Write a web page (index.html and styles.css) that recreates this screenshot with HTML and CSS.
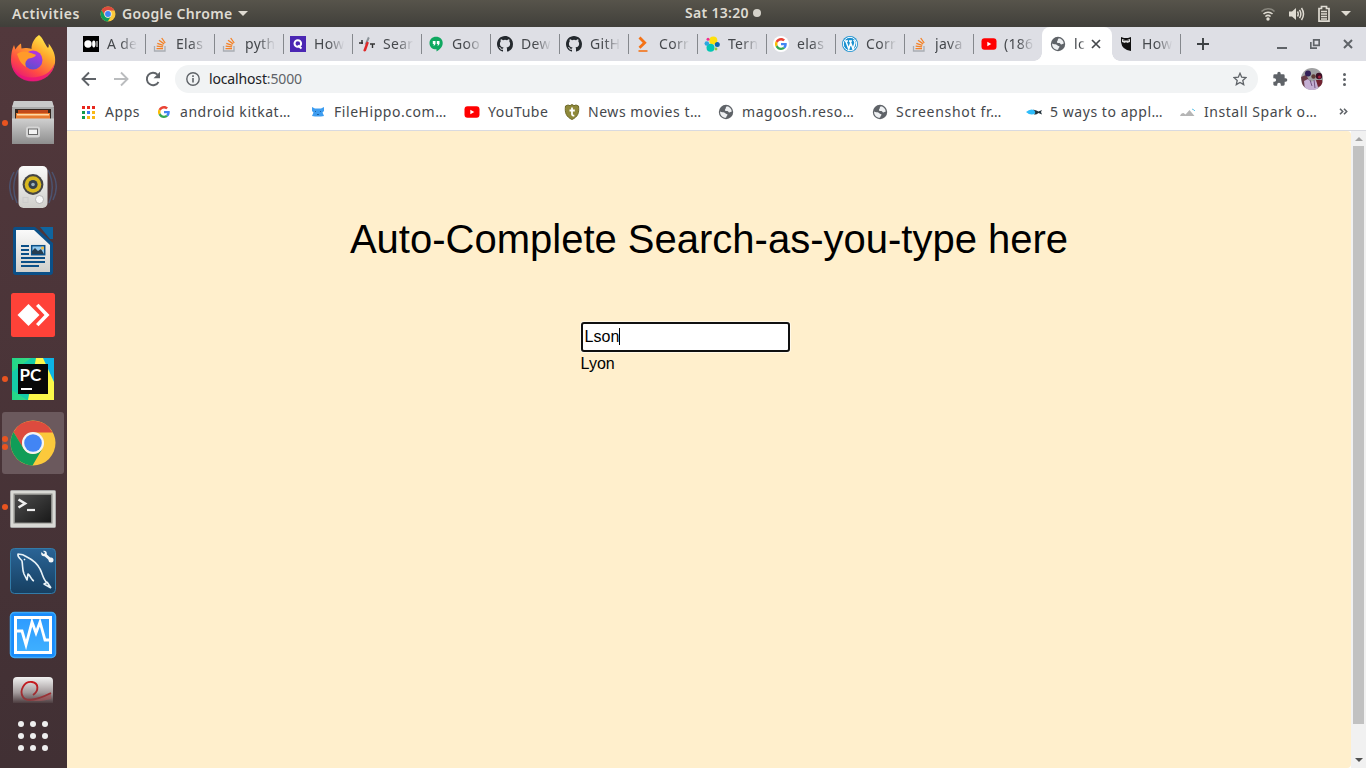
FILE: index.html
```html
<!DOCTYPE html>
<html lang="en">
<head>
<meta charset="utf-8">
<title>localhost:5000</title>
<link rel="stylesheet" href="styles.css">
</head>
<body>
<svg class="defs" width="0" height="0">
  <defs>
    <linearGradient id="ffA" x1="0.8" y1="0" x2="0.2" y2="1"><stop offset="0" stop-color="#fff44f"/><stop offset=".35" stop-color="#ffa72b"/><stop offset=".7" stop-color="#ff4a45"/><stop offset="1" stop-color="#e3107e"/></linearGradient>
    <linearGradient id="ffB" x1="0.7" y1="0" x2="0.3" y2="1"><stop offset="0" stop-color="#b833e1"/><stop offset="1" stop-color="#5a4fd0"/></linearGradient>
    <linearGradient id="metal" x1="0" y1="0" x2="0" y2="1"><stop offset="0" stop-color="#d0d0d0"/><stop offset="1" stop-color="#8e8e8e"/></linearGradient>
    <linearGradient id="white" x1="0" y1="0" x2="0" y2="1"><stop offset="0" stop-color="#fafafa"/><stop offset="1" stop-color="#cfcfcb"/></linearGradient>
    <linearGradient id="pcA" x1="0" y1="0" x2="1" y2="0"><stop offset="0" stop-color="#21d789"/><stop offset=".55" stop-color="#3fdc80"/><stop offset="1" stop-color="#a8ec62"/></linearGradient>
    <linearGradient id="dark" x1="0" y1="0" x2="1" y2="1"><stop offset="0" stop-color="#4c4c4c"/><stop offset=".5" stop-color="#333"/><stop offset="1" stop-color="#191919"/></linearGradient>
    <linearGradient id="blue" x1="0" y1="0" x2="0" y2="1"><stop offset="0" stop-color="#2a6496"/><stop offset="1" stop-color="#163f61"/></linearGradient>
    <linearGradient id="sky" x1="0" y1="0" x2="0" y2="1"><stop offset="0" stop-color="#2e9bff"/><stop offset="1" stop-color="#3fb0ff"/></linearGradient>
    <linearGradient id="fade" x1="0" y1="0" x2="0" y2="1"><stop offset="0" stop-color="#f2f2f2"/><stop offset=".6" stop-color="#a39b9c"/><stop offset="1" stop-color="#4d3d40"/></linearGradient>
    <linearGradient id="swirl" x1="0" y1="0" x2="0" y2="1"><stop offset="0" stop-color="#c8181c"/><stop offset="1" stop-color="#8a3a3e"/></linearGradient>
    <symbol id="chrome" viewBox="0 0 48 48">
      <circle cx="24" cy="24" r="22.500" fill="#fbc93c"/>
      <path d="M4.500 13A22.500 22.500 0 0 1 43.700 13.500H24a11 11 0 0 0-9.800 16z" fill="#dd4b3e"/>
      <path d="M4.500 13A22.500 22.500 0 0 0 23.500 46.500l10-17A11 11 0 0 1 14.500 29.500z" fill="#109d58"/>
      <circle cx="24" cy="24" r="11" fill="#f4f4f4"/><circle cx="24" cy="24" r="8.800" fill="#4285f4"/>
    </symbol>
    <symbol id="so" viewBox="0 0 16 16">
      <path d="M2.500 10v5h10.500v-5" fill="none" stroke="#a9adb2" stroke-width="1.3"/>
      <path d="M4.500 12.700h6.500M4.700 10.200l6.400.6M5.300 7.400l6 1.900M7 4.300l5.100 3.600M9.700 2l3.500 5" fill="none" stroke="#f48024" stroke-width="1.300"/>
    </symbol>
    <symbol id="google" viewBox="0 0 48 48">
      <path fill="#ea4335" d="M24 9.500c3.500 0 6.700 1.200 9.200 3.600l6.800-6.800C35.900 2.400 30.500 0 24 0 14.600 0 6.500 5.400 2.600 13.200l8 6.200C12.400 13.700 17.700 9.500 24 9.500z"/>
      <path fill="#4285f4" d="M47 24.500c0-1.600-.2-3.100-.4-4.500H24v9h12.900c-.6 3-2.200 5.500-4.700 7.200l7.700 6C44.400 38 47 31.800 47 24.500z"/>
      <path fill="#fbbc05" d="M10.500 28.600a14.500 14.500 0 0 1 0-9.200l-8-6.200a24 24 0 0 0 0 21.600z"/>
      <path fill="#34a853" d="M24 48c6.500 0 11.900-2.100 15.900-5.800l-7.700-6c-2.200 1.500-4.900 2.300-8.200 2.300-6.300 0-11.600-4.200-13.500-9.900l-8 6.200C6.500 42.600 14.600 48 24 48z"/>
    </symbol>
    <symbol id="github" viewBox="0 0 16 16">
      <path fill="#24292e" fill-rule="evenodd" d="M8 0C3.580 0 0 3.580 0 8c0 3.540 2.290 6.530 5.470 7.590.4.070.55-.17.55-.38 0-.19-.01-.82-.01-1.490-2.010.37-2.530-.49-2.690-.94-.09-.23-.48-.94-.82-1.130-.28-.15-.68-.52-.01-.53.63-.01 1.080.58 1.230.82.720 1.210 1.870.87 2.330.66.070-.52.280-.87.510-1.070-1.780-.2-3.640-.89-3.640-3.950 0-.87.310-1.590.820-2.150-.08-.2-.36-1.020.08-2.120 0 0 .67-.21 2.200.82a7.600 7.600 0 0 1 4 0c1.530-1.040 2.200-.82 2.200-.82.440 1.100.160 1.920.080 2.120.510.560.820 1.270.820 2.150 0 3.070-1.870 3.750-3.650 3.950.290.250.540.730.540 1.480 0 1.070-.01 1.930-.01 2.200 0 .21.150.46.550.38A8.010 8.010 0 0 0 16 8c0-4.420-3.580-8-8-8z"/>
    </symbol>
    <symbol id="globe" viewBox="0 0 16 16">
      <circle cx="8" cy="8" r="7.200" fill="#5f6368"/>
      <path d="M8.800 2.200c2.700.4 4.700 2.500 5 5.200-1 .2-1.500 1-2.400 1-1.300 0-.8-1.500-2.100-1.500-1 0-2.400.2-2.400-.9 0-1 .9-1.100.9-2 0-.9.500-1.200 1-1.800zM2.100 7.500c1.600.9 3 .5 4.200 1.100 1 .5 1.100 1.200 2.300 1.300 1 0 1.200 1 .5 1.600-.7.500-.5 1.400-1.200 2.300C4.400 13.700 1.800 11 2.100 7.500z" fill="#eef0f2"/>
    </symbol>
    <symbol id="yt" viewBox="0 0 16 16"><rect x=".5" y="2.300" width="15" height="11.400" rx="3" fill="#f00"/><path d="M6.300 5.700v4.600L10.300 8z" fill="#fff"/></symbol>
  </defs>
</svg>

<header class="topbar">
  <span class="top-activities">Activities</span>
  <svg class="top-chrome" width="16" height="16"><use href="#chrome"/></svg>
  <span class="top-app">Google Chrome</span>
  <i class="caret"></i>
  <div class="clock"><span>Sat 13:20</span><i class="dot"></i></div>
  <div class="tray">
    <svg width="16" height="16" viewBox="0 0 16 16" fill="none" stroke="#dfdbd2" stroke-width="1.600"><path d="M1.500 5.500a9 9 0 0 1 13 0" opacity=".4"/><path d="M3.500 8a6.500 6.500 0 0 1 9 0M5.400 10.500a4 4 0 0 1 5.200 0"/><circle cx="8" cy="13" r="1.700" fill="#dfdbd2" stroke="none"/></svg>
    <svg width="17" height="16" viewBox="0 0 17 16" fill="none" stroke="#dfdbd2" stroke-width="1.500"><path d="M1 5.500h3L8 2v12l-4-3.500H1z" fill="#dfdbd2" stroke="none"/><path d="M9.500 5.500q1.500 2.500 0 5M11.500 3.800q2.700 4.200 0 8.400M13.500 2q4 6 0 12"/></svg>
    <svg width="14" height="18" viewBox="0 0 14 18"><path d="M2 3.500h2.500v-2h5v2H12v12.700H2z" fill="none" stroke="#dfdbd2" stroke-width="1.700"/><path d="M4 6.500h6M4 9h6M4 11.500h6M4 14h6" stroke="#dfdbd2" stroke-width="1.300"/></svg>
    <i class="caret"></i>
  </div>
</header>

<main class="desktop">
  <nav class="launcher">
    <div class="slot"><svg width="48" height="48" viewBox="0 1 48 48"><path d="M30 1c4 3 5 8 9 13 1-1 1-3 .5-4.500C44 15 47 21 46 29 44 40 35 47 24 47 11 47 2 38 2 26c0-6 1-11 3-15l1.500 4.500C7.500 13 9.500 11 12 9.500l.5 5c3-1 7-.5 10 .5 0-6 3-11 7.500-14z" fill="url(#ffA)"/><path d="M2.500 29c2 9 10 14.500 20 14.500 11 0 20-5 23-14C44.500 40 35 47.500 24 47.500 12 47.500 4 40 2.500 29z" fill="#e8127d" opacity=".75"/><circle cx="24" cy="26" r="9.500" fill="url(#ffB)"/><path d="M8 20c6-4 10-2 14-1 2 1 4 1 5 2-2 4-7 2-9 5-2 2-2 4-1 7-6-4-7-8-9-13z" fill="#ff9a2a"/></svg></div>
    <div class="slot run"><svg width="48" height="48" viewBox="0 0 48 48"><path d="M5 2h38l2 7v36H3V9z" fill="#aaa"/><path d="M5 2h38l2 6H3z" fill="#c9c9c9"/><path d="M6 10h36v10H6z" fill="#332721"/><path d="M9 11h30v3H9z" fill="#c2491a"/><path d="M7 14h34v6H7z" fill="#e87b31"/><path d="M8 15h32v1.500H8z" fill="#ffd9a6"/><path d="M3 19.500h42v25.500H3z" fill="url(#metal)"/><rect x="17" y="27.500" width="14" height="11" rx="2.500" fill="#d5d5d5"/><rect x="19.500" y="30" width="9" height="5.500" fill="#f3f3f3" stroke="#6a6a6a"/></svg></div>
    <div class="slot"><svg width="48" height="48" viewBox="0 0 48 48"><path d="M5 9Q-3 23 4 37M43 9q8 14 1 28M9 7Q1 24 8 40M39 7q8 17 1 33" fill="none" stroke="#4b6591" stroke-width="1.500" opacity=".6"/><rect x="9.500" y="3" width="29" height="42" rx="5" fill="url(#white)"/><circle cx="24" cy="21.500" r="10.400" fill="#454545"/><circle cx="24" cy="21.500" r="8.300" fill="#d8b81f"/><circle cx="24" cy="21.500" r="4.600" fill="#34404c"/><circle cx="24" cy="21.500" r="1.800" fill="#9bb0bb"/><circle cx="30.500" cy="36.500" r="4" fill="#f7f7f7" stroke="#aaa" stroke-width=".8"/><rect x="14" y="34.500" width="5" height="5" fill="none" stroke="#ccc"/></svg></div>
    <div class="slot"><svg width="48" height="48" viewBox="0 0 48 48"><path d="M6 0h20l18 16v29q0 3-3 3H7q-3 0-3-3V3q0-3 2-3z" fill="#0b5088"/><path d="M31 0h13v12h-3z" fill="#0f659f"/><path d="M7 3h18l16 15v27H7z" fill="url(#white)"/><path d="M12 19h8M12 23h8M12 27h8M12 31h24M12 35h24M12 39h18" stroke="#0b5088" stroke-width="2"/><rect x="22.700" y="18.700" width="13" height="9" fill="#91c9ef" stroke="#0b5088" stroke-width="1.500"/><path d="M23 27v-3l3-3 3 3 3-2 3 5z" fill="#263e52"/><circle cx="33.500" cy="21" r="1.500" fill="#f3ba3b"/></svg></div>
    <div class="slot"><svg width="48" height="48" viewBox="0 0 48 48"><rect x="2" y="2" width="44" height="44" rx="2.500" fill="#ff4238"/><path d="M8.500 24l11-11 11 11-11 11z" fill="#fff"/><path d="M27 15l2.500-2.300L40.500 24l-11 11.300L27 33l8.500-9z" fill="#fff"/></svg></div>
    <div class="slot run"><svg width="48" height="48" viewBox="0 0 48 48"><rect x="3" y="3" width="42" height="42" fill="url(#pcA)"/><path d="M3 17L22 3h12l-8 42H18L3 35z" fill="#14cba7"/><path d="M27 3h10l8 23v19H19z" fill="#fcf84a"/><path d="M34 3h11v24z" fill="#0cb4e5"/><rect x="9" y="9" width="30" height="30" fill="#080808"/><rect x="12" y="33" width="11" height="2" fill="#fff"/><text class="pc" x="10.500" y="26">PC</text></svg></div>
    <div class="slot active two"><svg width="48" height="48"><use href="#chrome"/></svg></div>
    <div class="slot run"><svg width="48" height="48" viewBox="0 -2 48 48"><rect x="1.500" y="5.500" width="45" height="37" rx="1" fill="#d9d9d5" stroke="#aaa"/><rect x="4.500" y="8.500" width="39" height="30" fill="#8b8b88"/><rect x="6" y="10" width="36" height="27.500" fill="url(#dark)"/><path d="M9.500 14.500l6.500 4-6.500 4" fill="none" stroke="#eee" stroke-width="2.600"/><path d="M18 25h8" stroke="#eee" stroke-width="2.200"/></svg></div>
    <div class="slot"><svg width="48" height="48" viewBox="0 0 48 48"><rect x="1.500" y="1.500" width="45" height="45" rx="4" fill="url(#blue)" stroke="#327ba8"/><path d="M42 41l-7-4 3-1.500c-4-3-4-8-7-13.500-3-6-7-9-13-12-4-3-7-3-9-3-1 3 3 5 4 7 1 5 0 8 2 13l3 6 1-6c3 2 3 6 6 7M42 41l-4-6M15 12l1 1" fill="none" stroke="#e8f2f7" stroke-width="1.600" stroke-linejoin="round"/><path d="M34 6l9 8" stroke="#f2f6f8" stroke-width="3"/><circle cx="35" cy="6.500" r="2.800" fill="#f2f6f8"/><circle cx="42" cy="13" r="2.500" fill="#f2f6f8"/><path d="M32.500 4l3 2.500" stroke="#28608f" stroke-width="1.800"/></svg></div>
    <div class="slot"><svg width="48" height="48" viewBox="0 0 48 48"><rect x="1.500" y="1.500" width="45" height="45" rx="4" fill="#188bfb" stroke="#3ea9f5" stroke-width="1.500"/><rect x="6.500" y="6.500" width="35" height="35" fill="url(#sky)" stroke="#fff" stroke-width="3"/><path d="M8 20h5l4 14 6-23 4 11 4-11 5 18h5" fill="none" stroke="#fff" stroke-width="2.800"/></svg></div>
    <div class="slot-cut"><svg width="48" height="30" viewBox="0 0 48 30"><path d="M4 27V5q0-4 4-4h32q4 0 4 4v22z" fill="url(#fade)"/><path d="M42 17c-9 6-18 6-24 7 8 2 17 1 24-1z" fill="#a85356" opacity=".6"/><path d="M24 19c6-4 6-12-1-13-8-1-13 9-9 15 3 5 14 3 28-4" fill="none" stroke="url(#swirl)" stroke-width="1.900"/></svg></div>
    <div class="apps-grid"><i></i><i></i><i></i><i></i><i></i><i></i><i></i><i></i><i></i></div>
  </nav>

  <section class="browser">
    <div class="tabstrip">
      <div class="tab"><svg viewBox="0 0 16 16"><rect width="16" height="16" fill="#000"/><circle cx="5" cy="8" r="3.700" fill="#fff"/><ellipse cx="10.800" cy="8" rx="1.700" ry="3.400" fill="#fff"/><path d="M14 5v6" stroke="#fff"/></svg><span>A de</span></div>
      <div class="tab"><svg><use href="#so"/></svg><span>Elas</span></div>
      <div class="tab"><svg><use href="#so"/></svg><span>pyth</span></div>
      <div class="tab"><svg viewBox="0 0 16 16"><rect width="16" height="16" fill="#4b27b3"/><circle cx="7.800" cy="7.500" r="3.300" fill="none" stroke="#fff" stroke-width="2"/><path d="M8 9.500l3.500 3" stroke="#fff" stroke-width="2"/></svg><span>How</span></div>
      <div class="tab"><svg viewBox="0 0 16 16"><path d="M0 7h4M3 4v4" stroke="#333" stroke-width="1.500"/><path d="M9 .8l1.700 1.200-3.200 7-1.800-.7z" fill="#8b9298"/><path d="M7.700 5.500l2.200 1-3 8.500q-1.700 1-2.600-.5z" fill="#df2929"/><path d="M11 8h5M13.500 8v4" stroke="#333" stroke-width="1.400"/></svg><span>Sear</span></div>
      <div class="tab"><svg viewBox="0 0 16 16"><path d="M8 .8c4 0 6.700 2.700 6.700 6.200 0 4-3 6.800-6.200 8.500v-2.200C4.500 13.500 1.500 11 1.500 7.200 1.500 3.500 4.300.8 8 .8z" fill="#0fa860"/><path d="M4.800 5h2.700v3L6.400 9.500H5.300L6 8H4.800zM8.800 5h2.700v3l-1.100 1.500H9.300L10 8H8.800z" fill="#fff"/></svg><span>Goo</span></div>
      <div class="tab"><svg><use href="#github"/></svg><span>Dew</span></div>
      <div class="tab"><svg><use href="#github"/></svg><span>GitH</span></div>
      <div class="tab"><svg viewBox="0 0 16 16"><path d="M4.500 1.500L9.700 6.800l-5.200 5" fill="none" stroke="#f47216" stroke-width="2.800"/><path d="M3.500 15h9" stroke="#f47216" stroke-width="1.600"/></svg><span>Corr</span></div>
      <div class="tab"><svg viewBox="0 0 16 16"><circle cx="9.300" cy="4.500" r="4" fill="#fee00d"/><circle cx="6.500" cy="11.700" r="4" fill="#03c6b3"/><circle cx="2.800" cy="7.500" r="2.300" fill="#2da8df"/><circle cx="13.300" cy="8.400" r="2.500" fill="#0b64b1"/><circle cx="4" cy="3.300" r="1.500" fill="#f12a91"/><circle cx="12" cy="13" r="1.400" fill="#93c93e"/></svg><span>Tern</span></div>
      <div class="tab"><svg viewBox="0 0 16 16"><circle cx="8" cy="8" r="8" fill="#fff"/><use href="#google" x="2" y="2" width="12" height="12"/></svg><span>elas</span></div>
      <div class="tab"><svg viewBox="0 0 16 16"><circle cx="8" cy="8" r="8" fill="#1c91d0"/><circle cx="8" cy="8" r="6.700" fill="none" stroke="#fff"/><path d="M3 5h3M3.800 5l3 8L8.500 7.500M7 5h3M8 5l3 8 2-6q0-2-1.500-3" fill="none" stroke="#fff" stroke-width="1.500"/></svg><span>Corr</span></div>
      <div class="tab"><svg><use href="#so"/></svg><span>java</span></div>
      <div class="tab nosep"><svg class="nudge"><use href="#yt"/></svg><span>(186</span></div>
      <div class="tab current"><svg><use href="#globe"/></svg><span>lc</span><svg class="close" viewBox="0 0 10 10"><path d="M1 1l8 8M9 1L1 9" stroke="#45484c" stroke-width="1.700"/></svg></div>
      <div class="tab"><svg viewBox="0 0 16 16"><path d="M3 1l3 1h4l3-1v14q-9-1-10-9z" fill="#111"/><path d="M4 3l3 1 1 1 1-1 3-1v3l-3 1-1-1-1 1-3-1z" fill="#ddd"/><path d="M5.500 4.500h1M9.500 4.500h1" stroke="#111"/></svg><span>How</span></div>
      <svg class="newtab" viewBox="0 0 12 12"><path d="M6 0v12M0 6h12" stroke="#3c4043" stroke-width="1.900"/></svg>
      <div class="winbtns">
        <svg width="10" height="10" viewBox="0 0 10 10"><path d="M0 9h10" stroke="#5f6368" stroke-width="2"/></svg>
        <svg width="10" height="10" viewBox="0 0 10 10" fill="none" stroke="#5f6368" stroke-width="1.700"><path d="M3.700.8h5.500v5.500H3.700zM.8 3v6.200H7"/></svg>
        <svg width="10" height="10" viewBox="0 0 10 10"><path d="M1 1l8 8M9 1L1 9" stroke="#5f6368" stroke-width="2"/></svg>
      </div>
    </div>

    <div class="toolbar">
      <svg class="nav-ico" viewBox="0 0 16 16"><path d="M15 8H2M8 1.500L1.500 8 8 14.500" fill="none" stroke="#5f6368" stroke-width="1.900"/></svg>
      <svg class="nav-ico" viewBox="0 0 16 16"><path d="M1 8h13M8 1.500L14.500 8 8 14.500" fill="none" stroke="#babcbe" stroke-width="1.900"/></svg>
      <svg class="nav-ico" viewBox="0 0 16 16"><path d="M13.500 11A6.200 6.200 0 1 1 12.500 3.600" fill="none" stroke="#5f6368" stroke-width="1.900"/><path d="M15 .8v6.500H8.500z" fill="#5f6368"/></svg>
      <div class="omnibox">
        <svg width="14" height="14" viewBox="0 0 14 14"><circle cx="7" cy="7" r="6.200" fill="none" stroke="#5f6368" stroke-width="1.400"/><path d="M7 6v4.500M7 3.300v1.600" stroke="#5f6368" stroke-width="1.600"/></svg>
        <span class="url">localhost<em>:5000</em></span>
        <svg class="star" width="14" height="14" viewBox="0 0 14 14"><path d="M7 1.300l1.700 3.900 4.300.4-3.200 2.800.9 4.200L7 10.400l-3.700 2.200.9-4.200L1 5.600l4.300-.4z" fill="none" stroke="#5f6368" stroke-width="1.300"/></svg>
      </div>
      <svg class="puzzle" width="16" height="16" viewBox="0 0 24 24"><path d="M20.500 11H19V7a2 2 0 0 0-2-2h-4V3.500a2.500 2.500 0 0 0-5 0V5H4a2 2 0 0 0-2 2v3.800h1.500a2.700 2.700 0 0 1 0 5.400H2V20c0 1.100.9 2 2 2h3.800v-1.500a2.700 2.700 0 0 1 5.400 0V22H17a2 2 0 0 0 2-2v-4h1.500a2.500 2.500 0 0 0 0-5z" fill="#5f6368"/></svg>
      <svg class="avatar" width="22" height="22" viewBox="0 0 22 22"><rect width="22" height="22" fill="#a0a1a2"/><path d="M0 9l5-2 3 5-1 8H2z" fill="#683b46"/><circle cx="7" cy="5.500" r="3" fill="#322057"/><circle cx="12.500" cy="8.500" r="2.200" fill="#5b3c34"/><circle cx="18" cy="8" r="3.200" fill="#3c1025"/><circle cx="18.500" cy="9" r="1.500" fill="#a3203a"/><path d="M3 13l4-2 3 3 4-2 4 5-2 6H4z" fill="#c5b0d4"/><path d="M15 12h6l1 5-5 2z" fill="#722331"/><path d="M9 12l2 6M13 12l1 8" stroke="#725580"/></svg>
      <div class="kebab"><i></i><i></i><i></i></div>
    </div>

    <div class="bookmarks">
      <div class="bm bm-apps"><svg viewBox="0 0 16 16"><path d="M2 2h3v3H2zM7 2h3v3H7zM12 2h3v3h-3z" fill="#e8281e"/><path d="M2 7h3v3H2z" fill="#129c4a"/><path d="M7 7h3v3H7z" fill="#397cf2"/><path d="M12 7h3v3h-3zM7 12h3v3H7zM12 12h3v3h-3z" fill="#f9b916"/><path d="M2 12h3v3H2z" fill="#129c4a"/></svg><span>Apps</span></div>
      <div class="bm"><svg viewBox="0 0 16 16"><use href="#google" x="2" y="2" width="12" height="12"/></svg><span>android kitkat…</span></div>
      <div class="bm"><svg viewBox="0 0 16 16"><path d="M2 3l3 1.500h6L14 3v4l-1.500 1.500L14 12l-3 .5H5L2 12l1.500-3.500L2 7z" fill="#3e9df0"/><path d="M5 7l1 1M11 7l-1 1M7 10.500h2" stroke="#1e62a5"/></svg><span>FileHippo.com…</span></div>
      <div class="bm bm-yt"><svg><use href="#yt"/></svg><span>YouTube</span></div>
      <div class="bm"><svg viewBox="0 0 16 16"><path d="M1.500 2L4 1l2 .7L8 .5l2 1.200L12 1l2.500 1c1 7-1 11-6.500 13.500C2.500 13 .5 9 1.500 2z" fill="#8f893a" stroke="#6d6828"/><path d="M8 3.500v7q.2 1.500 2.300.8M5.500 6.500h5.300" fill="none" stroke="#fff" stroke-width="1.800"/></svg><span>News movies t…</span></div>
      <div class="bm"><svg><use href="#globe"/></svg><span>magoosh.reso…</span></div>
      <div class="bm wide"><svg><use href="#globe"/></svg><span>Screenshot fr…</span></div>
      <div class="bm"><svg viewBox="0 0 16 16"><path d="M0 8q5-4.500 10-1 1 1 0 2-5 3.500-10-1z" fill="#2ebcfa"/><path d="M7 5.500q4 1 5.500 2L16 6l-1 2 1 2.500-3.500-1.500Q11 10.500 8 10.700 11 8 7 5.500z" fill="#23323b"/></svg><span>5 ways to appl…</span></div>
      <div class="bm"><svg viewBox="0 0 16 16"><path d="M0 12q1-3 3.500-3l2 1.500L9.500 6l5 6z" fill="#b5b5b5"/><path d="M12 5l2 1M14 7l1-1" stroke="#5fc4e8"/></svg><span>Install Spark o…</span></div>
      <svg class="more" width="9" height="7" viewBox="0 0 9 7"><path d="M1 .7l2.700 2.800L1 6.300M5 .7l2.700 2.800L5 6.300" fill="none" stroke="#5f6368" stroke-width="1.600"/></svg>
    </div>

    <div class="viewport">
      <div class="page">
        <h1>Auto-Complete Search-as-you-type here</h1>
        <div class="search">
          <div class="field">Lson<i class="cursor"></i></div>
          <div class="result">Lyon</div>
        </div>
      </div>
      <div class="scrollbar"><i class="arrow up"></i><i class="thumb"></i><i class="arrow down"></i></div>
    </div>
  </section>
</main>
</body>
</html>
```

FILE: styles.css
```css
* { box-sizing: border-box; }
body { margin: 0; width: 1366px; height: 768px; overflow: hidden; display: flex; flex-direction: column; font-family: "Noto Sans", "Open Sans", sans-serif; }
svg { flex: none; display: block; }
.defs { position: absolute; }

/* GNOME panel */
.topbar { position: relative; height: 27px; flex: none; display: flex; align-items: center; padding: 0 15px 0 12px; background: linear-gradient(#57544b, #403f3a); color: #dfdbd2; font-size: 14px; font-weight: 600; line-height: 27px; white-space: nowrap; }
.top-activities { width: 88px; letter-spacing: 0.55px; }
.top-chrome { margin-right: 6px; }
.top-app { width: 110px; letter-spacing: 0.35px; }
.caret { width: 0; height: 0; margin-left: 6px; border: 5px solid transparent; border-top-color: #dfdbd2; border-bottom: 0; }
.clock { position: absolute; left: 685px; top: -1px; display: flex; align-items: center; gap: 4px; }
.clock span { width: 64px; letter-spacing: 0.3px; }
.dot { width: 8px; height: 8px; border-radius: 50%; background: #d5d2ca; }
.tray { margin-left: auto; display: flex; align-items: center; gap: 12px; }
.tray .caret { margin-left: -2px; }

.desktop { flex: 1; display: flex; min-height: 0; }

/* Launcher */
.launcher { width: 67px; flex: none; background: linear-gradient(#52383c, #413034); display: flex; flex-direction: column; align-items: flex-start; }
.slot { position: relative; width: 66px; height: 64px; flex: none; display: flex; align-items: center; justify-content: center; }
.active::before { content: ""; position: absolute; left: 2px; top: 1px; width: 62px; height: 62px; border-radius: 3px; background: #6b595d; }
.slot svg { position: relative; }
.run::after, .two::after { content: ""; position: absolute; left: 2px; top: 29px; width: 6px; height: 6px; border-radius: 50%; background: #e95420; }
.two::after { top: 25px; box-shadow: 0 8px #e95420; }
.slot-cut { width: 66px; height: 38px; padding: 9px 0 0 9px; }
.apps-grid { width: 66px; padding: 16px 0 0 18px; display: grid; grid-template-columns: repeat(3, 6px); gap: 6px; }
.apps-grid i { width: 6px; height: 6px; border-radius: 50%; background: #eee; }
.pc { font: 700 17px Lato, sans-serif; fill: #fff; }

/* Tabs */
.browser { flex: 1; min-width: 0; display: flex; flex-direction: column; background: #fff; }
.tabstrip { height: 34px; flex: none; display: flex; align-items: center; background: #dedfe5; padding-left: 10px; color: #45484c; font-size: 14px; }
.tab { width: 69px; height: 34px; flex: none; position: relative; display: flex; align-items: center; gap: 8px; padding-left: 6px; }
.tab > svg { width: 16px; height: 16px; }
.tab span { width: 31px; white-space: nowrap; letter-spacing: 0.3px; line-height: 20px; -webkit-mask-image: linear-gradient(90deg, #000 45%, transparent 98%); mask-image: linear-gradient(90deg, #000 45%, transparent 98%); }
.tab::after { content: ""; position: absolute; right: 0; top: 7px; width: 1px; height: 20px; background: #85888d; }
.nosep::after, .current::after { display: none; }
.tab .nudge { margin: 0 -1px 0 1px; }
.current { background: #fff; border-radius: 8px 8px 0 0; padding-left: 8px; left: -1px; width: 70px; margin-right: -1px; }
.current::before { content: ""; position: absolute; z-index: 1; left: -8px; bottom: 0; width: 86px; height: 8px; background: radial-gradient(circle at 0 0, transparent 7.5px, #fff 8px) left/8px 8px no-repeat, radial-gradient(circle at 100% 0, transparent 7.5px, #fff 8px) right/8px 8px no-repeat; }
.tab.current span { width: 13px; }
.tab .close { width: 10px; height: 10px; margin-left: -4px; }
.newtab { width: 12px; height: 12px; margin-left: 16px; }
.winbtns { margin-left: auto; display: flex; gap: 23px; padding-right: 13px; }

/* Address row */
.toolbar { height: 36px; flex: none; display: flex; align-items: center; padding-left: 14px; }
.nav-ico { width: 16px; height: 16px; margin-right: 16px; }
.omnibox { width: 1083px; height: 28px; border-radius: 14px; margin-left: -2px; background: #f1f3f4; display: flex; align-items: center; padding: 0 11px; font-size: 14px; color: #202124; }
.url { margin-left: 9px; padding-bottom: 2px; letter-spacing: -0.15px; }
.url em { font-style: normal; color: #5f6368; }
.star { margin-left: auto; }
.puzzle { margin-left: 14px; }
.avatar { margin-left: 13px; border-radius: 50%; }
.kebab { margin-left: 20px; display: grid; gap: 2px; }
.kebab i { width: 3px; height: 3px; border-radius: 50%; background: #5f6368; }

/* Bookmarks */
.bookmarks { height: 34px; flex: none; display: flex; align-items: center; padding: 0 0 4px 13px; border-bottom: 1px solid #d9dae0; color: #45484c; font-size: 14px; letter-spacing: 0.55px; white-space: nowrap; }
.bm { width: 154px; flex: none; display: flex; align-items: center; gap: 8px; }
.bm svg { width: 16px; height: 16px; }
.bm-apps { width: 76px; gap: 9px; }
.bm-yt { width: 100px; }
.wide { letter-spacing: 0.7px; }
.more { margin-left: 5px; }

/* Page */
.viewport { flex: 1; min-height: 0; display: flex; }
.page { flex: 1; background: #ffefcc; border-radius: 0 4px 4px 0; font-family: "Liberation Sans", Arial, sans-serif; color: #000; }
h1 { margin: 85px 0 0; font-size: 40px; font-weight: 400; line-height: 46px; text-align: center; }
.search { width: 209px; margin: 60px 0 0 513.6px; font-size: 16px; }
.field { height: 30px; border: 2px solid #101010; border-radius: 3px; background: #fff; box-shadow: 0 0 0 1px #fff8e8; padding-left: 2px; display: flex; align-items: center; }
.cursor { width: 1px; height: 17px; margin-bottom: 2px; background: #000; }
.result { line-height: 18px; margin-top: 3px; }
.scrollbar { width: 15px; background: #f1f1f1; display: flex; flex-direction: column; align-items: center; }
.thumb { width: 11px; height: 578px; background: #c1c1c1; }
.arrow { width: 0; height: 0; border: 4px solid transparent; }
.up { border-top: 0; border-bottom-color: #a3a3a3; margin: 6px 0 5px; }
.down { border-bottom: 0; border-top-color: #505050; margin-top: auto; margin-bottom: 6px; }
```
